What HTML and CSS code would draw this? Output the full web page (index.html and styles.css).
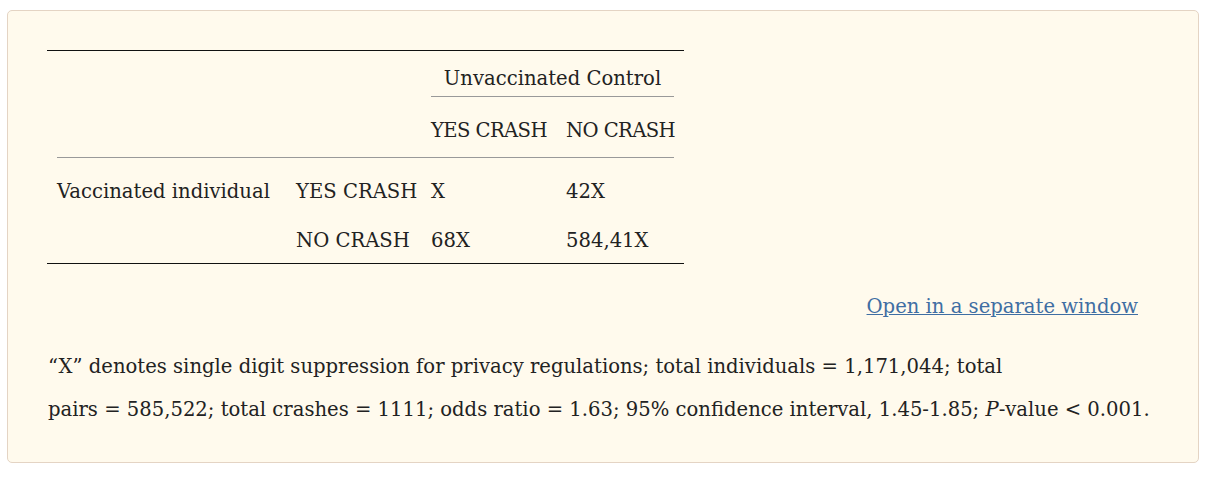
FILE: index.html
```html
<!DOCTYPE html>
<html>
<head>
<meta charset="utf-8">
<link rel="stylesheet" href="styles.css">
</head>
<body>
<div class="panel">
  <div class="table">
    <div class="c r1 span2"></div>
    <div class="c r1 head span2">Unvaccinated Control</div>
    <div class="c r2 span2 line"></div>
    <div class="c r2 line tight">YES CRASH</div>
    <div class="c r2 line tight">NO CRASH</div>
    <div class="c r3">Vaccinated individual</div>
    <div class="c r3">YES CRASH</div>
    <div class="c r3">X</div>
    <div class="c r3">42X</div>
    <div class="c r4"></div>
    <div class="c r4">NO CRASH</div>
    <div class="c r4">68X</div>
    <div class="c r4">584,41X</div>
  </div>
  <div class="linkrow"><a href="#" class="link">Open in a separate window</a></div>
  <p class="note">“X” denotes single digit suppression for privacy regulations; total individuals = 1,171,044; total<br>pairs = 585,522; total crashes = 1111; odds ratio = 1.63; 95% confidence interval, 1.45-1.85; <i>P</i>-value &lt; 0.001.</p>
</div>
</body>
</html>
```
FILE: styles.css
```css
html, body {
  margin: 0;
  padding: 0;
  background: #ffffff;
}
body {
  padding: 10px 23px 14px 7px;
  font-family: "DejaVu Serif", serif;
  color: #222222;
}
.panel {
  background: #fffaed;
  border: 1px solid #e4d4c4;
  border-radius: 5px;
  padding: 39px 40px 0 39px;
  height: 453px;
  box-sizing: border-box;
}
.table {
  width: 637px;
  box-sizing: border-box;
  display: grid;
  grid-template-columns: 239px 135px 135px 108px;
  padding: 0 10px;
  border-top: 1px solid #111;
  border-bottom: 1px solid #111;
  font-size: 19.6px;
  line-height: 28px;
  white-space: nowrap;
}
.span2 { grid-column: span 2; }
.r1 { padding: 14px 0 3px; }
.head { border-bottom: 1px solid #999; text-align: center; }
.r2 { padding: 20px 0 12px; }
.tight { letter-spacing: -0.6px; }
.line { border-bottom: 1px solid #999; }
.r3 { padding: 20px 0 0; }
.r4 { padding: 21px 0 8px; }
.linkrow {
  display: flex;
  justify-content: flex-end;
  padding-right: 20px;
  margin-top: 29px;
  font-size: 19.6px;
  line-height: 28px;
}
.link {
  color: #3f6ea3;
  text-decoration: underline;
}
.note {
  margin: 24px 0 0 1px;
  font-size: 19.6px;
  line-height: 43px;
  white-space: nowrap;
}
```
